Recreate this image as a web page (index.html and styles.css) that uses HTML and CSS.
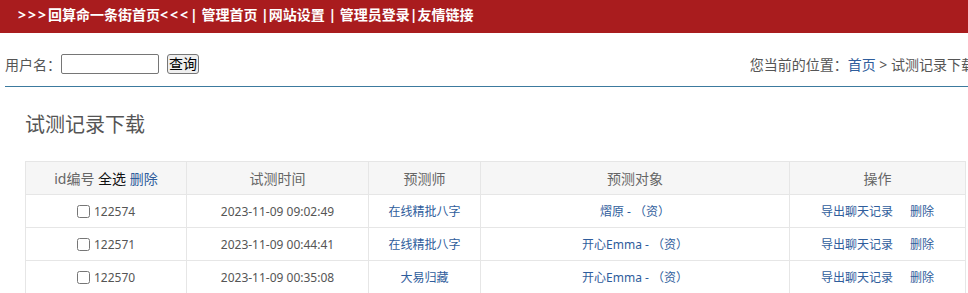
FILE: index.html
```html
<!DOCTYPE html>
<html lang="zh-CN">
<head>
    <meta charset="UTF-8">
    <title>试测记录下载</title>
    <link rel="stylesheet" href="styles.css">
</head>
<body>
    <div class="page">
        <div class="topbar">
            <span class="arrows">&gt;&gt;&gt;</span>回算命一条街首页<span class="arrows">&lt;&lt;&lt;</span>| 管理首页 |网站设置 | 管理员登录|友情链接
        </div>

        <div class="search-bar">
            <div class="search-form">
                <span class="label">用户名：</span>
                <input type="text" class="search-input">
                <button class="search-btn">查询</button>
            </div>
            <div class="crumbs">
                您当前的位置：<a href="#">首页</a> &gt; 试测记录下载
            </div>
        </div>

        <h2 class="title">试测记录下载</h2>

        <table class="records">
            <colgroup>
                <col style="width:161px">
                <col style="width:182px">
                <col style="width:112px">
                <col style="width:309px">
                <col style="width:176px">
            </colgroup>
            <thead>
                <tr>
                    <th>id编号 <span class="dark">全选</span> <a href="#">删除</a></th>
                    <th>试测时间</th>
                    <th>预测师</th>
                    <th>预测对象</th>
                    <th>操作</th>
                </tr>
            </thead>
            <tbody>
                <tr>
                    <td><input type="checkbox"> 122574</td>
                    <td>2023-11-09 09:02:49</td>
                    <td><a href="#">在线精批八字</a></td>
                    <td><a href="#">熠原 - （资）</a></td>
                    <td><a href="#">导出聊天记录</a><a href="#" class="del">删除</a></td>
                </tr>
                <tr>
                    <td><input type="checkbox"> 122571</td>
                    <td>2023-11-09 00:44:41</td>
                    <td><a href="#">在线精批八字</a></td>
                    <td><a href="#">开心Emma - （资）</a></td>
                    <td><a href="#">导出聊天记录</a><a href="#" class="del">删除</a></td>
                </tr>
                <tr>
                    <td><input type="checkbox"> 122570</td>
                    <td>2023-11-09 00:35:08</td>
                    <td><a href="#">大易归藏</a></td>
                    <td><a href="#">开心Emma - （资）</a></td>
                    <td><a href="#">导出聊天记录</a><a href="#" class="del">删除</a></td>
                </tr>
            </tbody>
        </table>
    </div>
</body>
</html>
```

FILE: styles.css
```css
html, body {
    margin: 0;
    overflow: hidden;
}
body {
    font-family: "Noto Sans", "Noto Sans CJK SC", sans-serif;
    color: #555;
    background: #fff;
}
a {
    color: #2f5d9c;
    text-decoration: none;
}
.page {
    width: 990px;
}
.topbar {
    height: 33px;
    line-height: 30px;
    padding-left: 18px;
    background-color: #a91c1e;
    color: #fff;
    font-size: 14px;
    font-weight: bold;
    white-space: nowrap;
}
.arrows {
    letter-spacing: 2px;
}
.search-bar {
    display: flex;
    justify-content: space-between;
    align-items: center;
    width: 970px;
    margin-left: 5px;
    padding: 21px 0 12px;
    border-bottom: 1px solid #3c7a9e;
    font-size: 14px;
}
.search-form {
    display: flex;
    align-items: center;
    height: 20px;
}
.search-input {
    width: 98px;
    height: 20px;
    margin: 0;
    padding: 0 2px;
    box-sizing: border-box;
    border: 1px solid #767676;
    border-radius: 2px;
}
.search-btn {
    height: 20px;
    margin-left: 8px;
    padding: 0 1px;
    font-family: inherit;
    font-size: 14px;
    line-height: 16px;
    color: #000;
    background: #efefef;
    border: 1px solid #767676;
    border-radius: 3px;
}
.crumbs {
    white-space: nowrap;
}
.title {
    margin: 24px 0 22px 25px;
    font-size: 20px;
    line-height: 28px;
    font-weight: normal;
    color: #555;
}
.records {
    margin-left: 25px;
    width: 940px;
    table-layout: fixed;
    border-collapse: collapse;
    border: 1px solid #e6e6e6;
}
.records th,
.records td {
    height: 32px;
    padding: 0;
    border: 1px solid #e6e6e6;
    text-align: center;
}
.records th {
    background: #f6f6f6;
    font-size: 14px;
    font-weight: normal;
    color: #666;
}
.records td {
    font-size: 12px;
}
.records td input {
    width: 13px;
    height: 13px;
    margin: 0 1px 0 0;
    vertical-align: -2px;
}
.dark {
    color: #111;
}
.del {
    margin-left: 17px;
}
```
